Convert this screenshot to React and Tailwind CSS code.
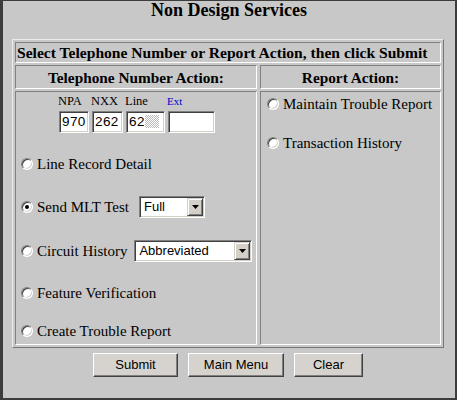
import React from "react";

const SERIF = "[font-family:'Liberation_Serif','Times_New_Roman',serif]";

function Radio({ checked }) {
  return (
    <span className="relative inline-block w-[12px] h-[12px] shrink-0 rounded-full bg-white border border-t-[#808080] border-l-[#808080] border-b-white border-r-white shadow-[inset_1px_1px_0_#404040,inset_-1px_-1px_0_#d4d0c8]">
      {checked && (
        <span className="absolute left-[3px] top-[3px] w-[4px] h-[4px] rounded-full bg-black" />
      )}
    </span>
  );
}

function TextBox({ className, children }) {
  return (
    <div
      className={
        "h-[22px] bg-white border border-t-[#808080] border-l-[#808080] border-b-white border-r-white shadow-[inset_1px_1px_0_#404040,inset_-1px_-1px_0_#d4d0c8] pl-[2px] pt-[2px] leading-[16px] text-[13.5px] tracking-[0.4px] text-black flex items-start [font-family:'Liberation_Sans',Arial,sans-serif] " +
        className
      }
    >
      {children}
    </div>
  );
}

function Select({ className, value }) {
  return (
    <div
      className={
        "flex h-[22px] bg-white border border-t-[#808080] border-l-[#808080] border-b-white border-r-white shadow-[inset_1px_1px_0_#404040,inset_-1px_-1px_0_#d4d0c8] p-px shrink-0 [font-family:'Liberation_Sans',Arial,sans-serif] " +
        className
      }
    >
      <div className="flex-1 pl-[3px] leading-[18px] text-[13px] text-black">{value}</div>
      <div className="w-[16px] h-full bg-[#d4d0c8] border border-t-[#d4d0c8] border-l-[#d4d0c8] border-b-[#404040] border-r-[#404040] shadow-[inset_1px_1px_0_#ffffff,inset_-1px_-1px_0_#808080] flex items-center justify-center">
        <svg width="7" height="4" viewBox="0 0 7 4">
          <path d="M0 0h7L3.5 4z" fill="#000" />
        </svg>
      </div>
    </div>
  );
}

function Button({ className, children }) {
  return (
    <button
      className={
        "h-[24px] bg-[#d6d3ce] border border-t-white border-l-white border-b-[#404040] border-r-[#404040] shadow-[inset_-1px_-1px_0_#808080] text-[13px] text-black [font-family:'Liberation_Sans',Arial,sans-serif] " +
        className
      }
    >
      {children}
    </button>
  );
}

const CELL =
  "border border-t-[#808080] border-l-[#808080] border-b-white border-r-white";

export default function App() {
  return (
    <div
      className={
        "w-[457px] h-[400px] bg-[#c8c8c8] border-l-[3px] border-t border-r-2 border-b-2 border-[#3c3c3c] text-black " +
        SERIF
      }
    >
      <div className="text-center text-[18px] font-bold leading-[19px]">
        Non Design Services
      </div>

      <div className="ml-[9px] mt-[19px] w-[432px] border border-t-[#ececec] border-l-[#ececec] border-b-[#767676] border-r-[#767676] p-[2px] flex flex-col gap-[2px]">
        <div className={CELL + " h-[21px] pl-px leading-[19px] text-[15.6px] font-bold whitespace-nowrap overflow-hidden"}>
          Select Telephone Number or Report Action, then click Submit
        </div>

        <div className="grid grid-cols-[242px_181px] gap-x-[3px] gap-y-[2px]">
          <div className={CELL + " h-[24px] pt-px text-center leading-[21px] text-[15.3px] font-bold whitespace-nowrap"}>
            Telephone Number Action:
          </div>
          <div className={CELL + " h-[24px] pt-px text-center leading-[21px] text-[15.3px] font-bold whitespace-nowrap"}>
            Report Action:
          </div>

          <div className={CELL + " h-[254px] flex flex-col pt-[2px] text-[15px]"}>
            <div className="ml-[42px] flex items-baseline gap-[3px] h-[14px] leading-[14px] text-[12.5px]">
              <span className="w-[30px]">NPA</span>
              <span className="w-[31px]">NXX</span>
              <span className="w-[39px]">Line</span>
              <span className="w-[47px] text-[11px] text-[#0000cc]">Ext</span>
            </div>
            <div className="ml-[43px] mt-[3px] flex gap-[3px]">
              <TextBox className="w-[30px]">970</TextBox>
              <TextBox className="w-[31px]">262</TextBox>
              <TextBox className="w-[39px]">
                62
                <span className="mt-[1px] w-[14px] h-[13px] opacity-60 bg-[repeating-conic-gradient(#8a8a8a_0_25%,#ffffff_0_50%)] bg-[length:2px_2px]" />
              </TextBox>
              <TextBox className="w-[47px]"></TextBox>
            </div>

            <div className="mt-[20px] ml-[5px] flex items-center h-[22px] leading-[22px]">
              <Radio />
              <span className="ml-[4px]">Line Record Detail</span>
            </div>
            <div className="mt-[21px] ml-[5px] flex items-center h-[22px] leading-[22px]">
              <Radio checked />
              <span className="ml-[4px]">Send MLT Test</span>
              <Select className="ml-[10px] w-[66px]" value="Full" />
            </div>
            <div className="mt-[22px] ml-[5px] flex items-center h-[22px] leading-[22px]">
              <Radio />
              <span className="ml-[4px]">Circuit History</span>
              <Select className="ml-[7px] w-[118px]" value="Abbreviated" />
            </div>
            <div className="mt-[20px] ml-[5px] flex items-center h-[22px] leading-[22px]">
              <Radio />
              <span className="ml-[4px]">Feature Verification</span>
            </div>
            <div className="mt-[16px] ml-[5px] flex items-center h-[22px] leading-[22px]">
              <Radio />
              <span className="ml-[4px]">Create Trouble Report</span>
            </div>
          </div>

          <div className={CELL + " h-[254px] flex flex-col pt-px text-[15px]"}>
            <div className="ml-[6px] flex items-center h-[22px] leading-[22px]">
              <Radio />
              <span className="ml-[4px] whitespace-nowrap">Maintain Trouble Report</span>
            </div>
            <div className="mt-[17px] ml-[6px] flex items-center h-[22px] leading-[22px]">
              <Radio />
              <span className="ml-[4px] whitespace-nowrap">Transaction History</span>
            </div>
          </div>
        </div>
      </div>

      <div className="mt-[5px] pl-[90px] flex gap-[10px]">
        <Button className="w-[85px]">Submit</Button>
        <Button className="w-[96px]">Main Menu</Button>
        <Button className="w-[69px]">Clear</Button>
      </div>
    </div>
  );
}
